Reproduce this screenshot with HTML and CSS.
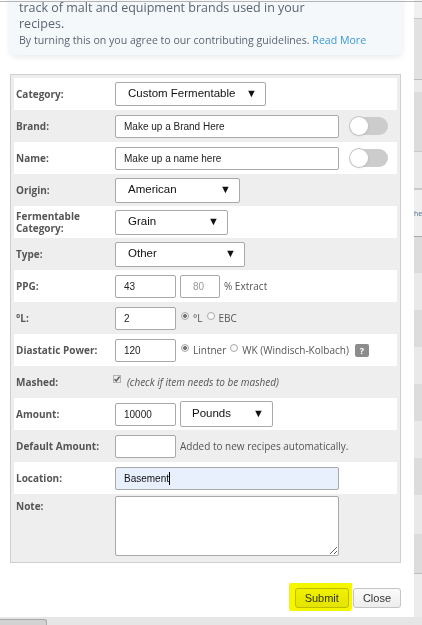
FILE: index.html
```html
<!DOCTYPE html>
<html lang="en">
<head>
<meta charset="utf-8">
<title>Custom Fermentable</title>
<link rel="stylesheet" href="styles.css">
</head>
<body>
<div class="screen">
  <div class="main">
    <div class="modal">
      <div class="notice">
        <p class="notice-lead">track of malt and equipment brands used in your recipes.</p>
        <p class="notice-terms">By turning this on you agree to our contributing guidelines. <a class="link" href="#">Read More</a></p>
      </div>

      <div class="form-table">
        <div class="row">
          <div class="label">Category:</div>
          <div class="value"><div class="select select--category"><span>Custom Fermentable</span><span class="arrow">▼</span></div></div>
        </div>
        <div class="row">
          <div class="label">Brand:</div>
          <div class="value"><input class="input input--wide" type="text" value="Make up a Brand Here"><span class="toggle"><span class="knob"></span></span></div>
        </div>
        <div class="row">
          <div class="label">Name:</div>
          <div class="value"><input class="input input--wide" type="text" value="Make up a name here"><span class="toggle"><span class="knob"></span></span></div>
        </div>
        <div class="row">
          <div class="label">Origin:</div>
          <div class="value"><div class="select select--origin"><span>American</span><span class="arrow">▼</span></div></div>
        </div>
        <div class="row">
          <div class="label label--two">Fermentable Category:</div>
          <div class="value"><div class="select select--grain"><span>Grain</span><span class="arrow">▼</span></div></div>
        </div>
        <div class="row">
          <div class="label">Type:</div>
          <div class="value"><div class="select select--type"><span>Other</span><span class="arrow">▼</span></div></div>
        </div>
        <div class="row">
          <div class="label">PPG:</div>
          <div class="value"><input class="input input--short" type="text" value="43"><input class="input input--tiny" type="text" value="80"><span class="hint">% Extract</span></div>
        </div>
        <div class="row">
          <div class="label">°L:</div>
          <div class="value"><input class="input input--short" type="text" value="2"><span class="choice"><span class="radio radio--on"></span>°L</span><span class="choice"><span class="radio"></span>EBC</span></div>
        </div>
        <div class="row">
          <div class="label">Diastatic Power:</div>
          <div class="value"><input class="input input--short" type="text" value="120"><span class="choice"><span class="radio radio--on"></span>Lintner</span><span class="choice"><span class="radio"></span>WK (Windisch-Kolbach)</span><span class="help">?</span></div>
        </div>
        <div class="row">
          <div class="label">Mashed:</div>
          <div class="value value--check"><span class="checkbox"><svg viewBox="0 0 8 8" width="8" height="8"><path d="M1.5 4.2 L3.2 6 L6.6 1.6" fill="none" stroke="#555" stroke-width="1.4"/></svg></span><em class="note-italic">(check if item needs to be mashed)</em></div>
        </div>
        <div class="row">
          <div class="label">Amount:</div>
          <div class="value"><input class="input input--short" type="text" value="10000"><div class="select select--unit"><span>Pounds</span><span class="arrow">▼</span></div></div>
        </div>
        <div class="row">
          <div class="label">Default Amount:</div>
          <div class="value"><input class="input input--short" type="text" value=""><span class="hint">Added to new recipes automatically.</span></div>
        </div>
        <div class="row">
          <div class="label">Location:</div>
          <div class="value"><div class="input input--wide input--autofill">Basement<span class="caret"></span></div></div>
        </div>
        <div class="row row--note">
          <div class="label">Note:</div>
          <div class="value"><textarea class="textarea"></textarea></div>
        </div>
      </div>

      <div class="actions">
        <span class="highlight-wrap"><button class="btn" type="button">Submit</button><span class="marker"></span></span>
        <button class="btn" type="button">Close</button>
      </div>
    </div>

    <div class="backdrop">
      <div class="band b1"></div>
      <div class="band b2"></div>
      <div class="band b3"></div>
      <div class="band b4"></div>
      <div class="band b5"></div>
      <div class="band b6"><span class="peek">he</span></div>
      <div class="band b7 dark"></div>
      <div class="band b7"></div>
      <div class="band b7 dark"></div>
      <div class="band b7"></div>
      <div class="band b7 dark"></div>
      <div class="band b7"></div>
      <div class="band b7 dark"></div>
      <div class="band b8"></div>
      <div class="band b8 dark"></div>
      <div class="band b9"></div>
    </div>
  </div>
  <div class="taskbar"><div class="tab"></div></div>
  <div class="top-line"></div>
</div>
</body>
</html>
```

FILE: styles.css
```css
* { box-sizing: border-box; }

html, body {
  margin: 0;
  padding: 0;
  width: 422px;
  height: 625px;
  overflow: hidden;
  background: #fff;
}

.screen {
  position: relative;
  width: 422px;
  height: 625px;
  display: flex;
  flex-direction: column;
  font-family: "Open Sans", "Liberation Sans", sans-serif;
}

.main {
  display: flex;
  height: 617px;
}

.modal {
  width: 414px;
  height: 617px;
  background: #fff;
  padding: 0 12px 0 10px;
  display: flex;
  flex-direction: column;
  overflow: hidden;
}

/* notice */
.notice {
  margin-top: -8px;
  background: #f5f8fb;
  border-radius: 6px;
  box-shadow: 0 2px 6px rgba(0, 0, 0, 0.09);
  padding: 8px 9px 7px 9px;
  width: 392px;
  color: #5b6473;
}
.notice p { margin: 0; }
.notice-lead {
  font-size: 12.5px;
  line-height: 16px;
  padding-right: 70px;
}
.notice-terms {
  font-size: 10.6px;
  line-height: 16px;
}
.link { color: #3a98d8; text-decoration: none; }

/* form table */
.form-table {
  margin-top: 19px;
  width: 391px;
  border: 1px solid #cfcfcf;
  background: #eeeeee;
  padding: 3px;
  display: flex;
  flex-direction: column;
}

.row {
  display: grid;
  grid-template-columns: 101px 1fr;
  align-items: center;
  height: 32px;
}
.row:nth-child(odd) { background: #fff; }

.row--note {
  height: 65px;
  align-items: start;
}

.label {
  padding-left: 2px;
  font-size: 10px;
  font-weight: 700;
  color: #555;
  line-height: 12px;
}
.label--two { width: 80px; }
.row--note .label { padding-top: 6px; }

.value {
  display: flex;
  align-items: center;
  gap: 4px;
  font-size: 10px;
  color: #555;
}
.row--note .value { padding-top: 2px; }

.input {
  height: 23px;
  border: 1px solid #a9a9a9;
  border-radius: 2px;
  background: #fff;
  font-family: "Liberation Sans", Arial, sans-serif;
  font-size: 10px;
  color: #222;
  padding: 0 0 0 8px;
  outline: none;
  margin: 0;
}
.input--wide { width: 224px; }
.input--short { width: 61px; }
.input--tiny { width: 40px; color: #9a9a9a; padding-left: 12px; }
.input--autofill {
  background: #e8f0fe;
  display: flex;
  align-items: center;
  color: #111;
}
.caret {
  display: inline-block;
  width: 1px;
  height: 13px;
  background: #000;
}

.select {
  height: 25px;
  border: 1px solid #a9a9a9;
  border-radius: 2px;
  background: #fff;
  display: flex;
  align-items: center;
  justify-content: space-between;
  padding: 0 8px 2px 12px;
  font-family: "Liberation Sans", Arial, sans-serif;
  font-size: 11.5px;
  color: #111;
}
.select .arrow { font-size: 11px; color: #111; }
.select--category { width: 151px; height: 24px; }
.select--origin { width: 125px; }
.select--grain { width: 113px; }
.select--type { width: 130px; }
.select--unit { width: 93px; height: 26px; padding-left: 11px; }

.toggle {
  margin-left: 7px;
  width: 38px;
  height: 18px;
  border-radius: 9px;
  background: #cccccc;
  display: flex;
  align-items: center;
  padding-left: 0;
}
.knob {
  width: 18px;
  height: 18px;
  border-radius: 50%;
  background: #fff;
  box-shadow: 0 0 0 1px #c4c4c4, 0 1px 2px rgba(0, 0, 0, 0.15);
}

.hint { color: #555; }

.choice {
  display: inline-flex;
  align-items: center;
  gap: 4px;
  margin-left: 1px;
  color: #555;
}
.choice + .choice { margin-left: 0; }
.radio {
  width: 8px;
  height: 8px;
  border-radius: 50%;
  border: 1px solid #a8a8a8;
  background: #fafafa;
  margin-top: -4px;
}
.radio--on {
  background: radial-gradient(circle, #777 0 1.6px, #f2f2f2 2.2px);
}

.help {
  margin-left: 2px;
  width: 14px;
  height: 13px;
  border-radius: 2px;
  background: #8c8c8c;
  color: #fff;
  font-weight: 700;
  font-size: 9px;
  display: flex;
  align-items: center;
  justify-content: center;
}

.value--check { gap: 6px; margin-left: -2px; }
.checkbox {
  width: 8px;
  height: 8px;
  background: #e9e9e9;
  border: 1px solid #b3b3b3;
  display: flex;
  margin-top: -6px;
}
.checkbox svg { display: block; margin: -1px; }
.note-italic { font-style: italic; color: #555; }

.textarea {
  width: 224px;
  height: 60px;
  border: 1px solid #a9a9a9;
  border-radius: 2px;
  background: #fff;
  margin: 0;
  resize: both;
  font-family: "Liberation Sans", Arial, sans-serif;
}

/* actions */
.actions {
  margin-top: 25px;
  width: 391px;
  display: flex;
  justify-content: flex-end;
  gap: 4px;
}
.btn {
  height: 20px;
  padding: 0 9px;
  border: 1px solid #c4c4c4;
  border-radius: 3px;
  background: linear-gradient(#fafafa, #ededed);
  font-family: "Liberation Sans", Arial, sans-serif;
  font-size: 11px;
  color: #333;
  margin: 0;
}
.highlight-wrap { position: relative; display: inline-flex; }
.marker {
  position: absolute;
  left: -6px;
  top: -5px;
  width: 63px;
  height: 28px;
  background: #f6f600;
  mix-blend-mode: multiply;
  border-radius: 2px 1px 3px 2px;
  pointer-events: none;
}

/* backdrop page strip */
.backdrop {
  flex: 1;
  display: flex;
  flex-direction: column;
  overflow: hidden;
}
.band { background: #e9e9e9; }
.b1 { height: 18px; background: #f1f1f1; }
.b2 { height: 61px; background: #e1e1e1; border-top: 1px solid #c8c8c8; }
.b3 { height: 13px; background: #eaeaea; border-top: 1px solid #bdbdbd; }
.b4 { height: 59px; background: #dcdcdc; }
.b5 { height: 37px; background: #e9e9e9; border-top: 1px solid #c9c9c9; }
.b6 {
  height: 48px;
  background: #efefef;
  border-top: 2px solid #c9c9c9;
  padding-top: 20px;
  overflow: hidden;
}
.peek {
  display: block;
  font-size: 7px;
  line-height: 8px;
  color: #4d6b8a;
  white-space: nowrap;
}
.b7 { height: 37px; }
.b7:nth-child(7) { border-top: 1px solid #a9a9a9; }
.b8 { height: 39px; }
.dark { background: #dcdcdc; }
.b9 { flex: 1; background: #ececec; border-top: 1px solid #bdbdbd; }

.taskbar {
  height: 8px;
  background: #e6e6e6;
  padding-top: 2px;
}
.tab {
  width: 47px;
  height: 6px;
  background: #d2d2d2;
  border-top: 1px solid #a9a9a9;
  border-right: 1px solid #a9a9a9;
  border-top-right-radius: 3px;
}

.top-line {
  position: absolute;
  left: 0;
  top: 1px;
  width: 422px;
  height: 1px;
  background: #b4b4b4;
}
```
